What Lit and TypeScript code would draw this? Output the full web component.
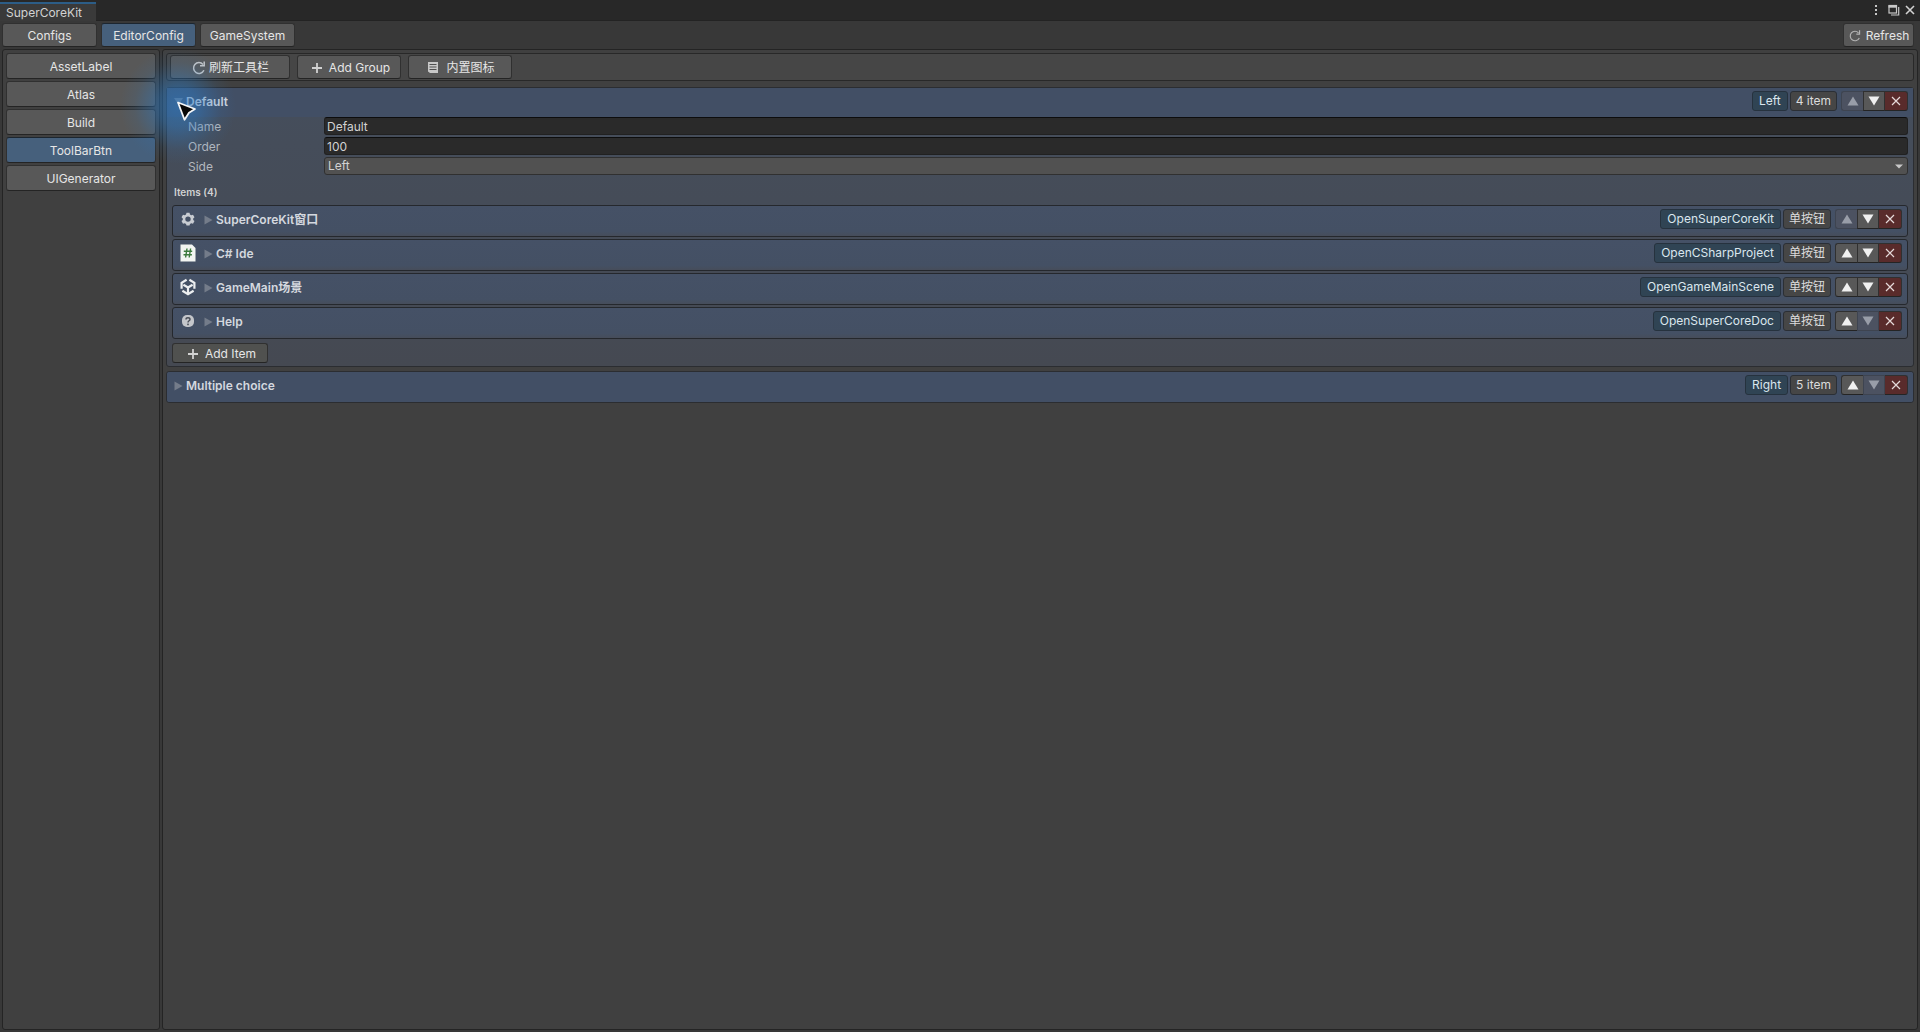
import { LitElement, html, css, svg } from "lit";
import { customElement, property, state } from "lit/decorators.js";
import { classMap } from "lit/directives/class-map.js";

const refreshIcon = svg`<svg width="16" height="16" viewBox="0 0 16 16" fill="none" stroke="#c8c8c8" aria-hidden="true">
  <path d="M12.900 10.200A5.400 5.400 0 1 1 12 4.400" stroke-width="1.500"/><path d="M13.200 1.500V5.800H9" stroke-width="1.500"/></svg>`;
const smallRefreshIcon = svg`<svg width="14" height="14" viewBox="0 0 16 16" fill="none" stroke="#b4b4b4" aria-hidden="true">
  <path d="M12.900 10.200A5.400 5.400 0 1 1 12 4.400" stroke-width="1.300"/><path d="M13.200 1.500V5.800H9.500" stroke-width="1.400"/></svg>`;
const plusIcon = svg`<svg width="16" height="16" viewBox="0 0 16 16" fill="none" stroke="#d2d2d2" stroke-width="1.800" aria-hidden="true">
  <path d="M9 3v10M4 8h10"/></svg>`;
const listIcon = svg`<svg width="16" height="16" viewBox="0 0 16 16" aria-hidden="true">
  <path d="M3 2h10v11H5l-2-1.500z" fill="#c8c8c8"/><path d="M4.500 4.500h7M4.500 7h7M4.500 9.500h7" stroke="#505050"/></svg>`;
const gearIcon = svg`<svg width="16" height="16" viewBox="0 0 16 16" aria-hidden="true">
  <path fill="#c8ccd2" fill-rule="evenodd" d="M6.500 1.800h3l.5 1.700 1.200.7 1.800-.5 1.500 2.600-1.300 1.200v1.400l1.300 1.200-1.500 2.600-1.800-.5-1.200.7-.5 1.700h-3L6 12.900l-1.200-.7-1.800.5-1.500-2.600 1.300-1.200V7.500L1.500 6.300 3 3.700l1.800.5L6 3.500zM8 5.400a2.700 2.700 0 1 0 0 5.400 2.700 2.700 0 0 0 0-5.400z"/></svg>`;
const scriptIcon = svg`<svg width="16" height="18" viewBox="0 0 16 18" aria-hidden="true">
  <path d="M.5.5h11.500L15.500 4v13.500H.5z" fill="#f2f5f2"/>
  <path d="M7 4.500 5.600 13.500M10.600 4.500 9.200 13.500M3.800 7.200h8.400M3.500 10.800h8.400" stroke="#3c7a3e" stroke-width="1.400" fill="none"/></svg>`;
const sceneIcon = svg`<svg width="16" height="18" viewBox="0 0 16 18" fill="none" stroke="#eceef0" stroke-width="2.200" aria-hidden="true">
  <path d="M8 9.500V16M8 9.500 3.400 6.800M8 9.500l4.600-2.700"/>
  <path d="M6.600 1.700 1.600 4.800V10.800M9.400 1.700 14.400 4.800V10.800M2.400 12.800 8 16.200l5.600-3.400"/></svg>`;
const helpIcon = svg`<svg width="16" height="16" viewBox="0 0 16 16" aria-hidden="true">
  <rect x="2" y="2" width="12" height="12" rx="5" fill="#c4c6ca"/>
  <path d="M6 6.500C6 4.200 10 4.200 10 6.500 10 7.800 8 7.800 8 9.400" stroke="#484c55" stroke-width="1.400" fill="none"/><rect x="7.200" y="10.600" width="1.600" height="1.600" fill="#484c55"/></svg>`;
const upIcon = svg`<svg width="12" height="10" viewBox="0 0 12 10" aria-hidden="true"><path d="M6 0.500 11.500 9.500H.5z" fill="currentColor"/></svg>`;
const downIcon = svg`<svg width="12" height="10" viewBox="0 0 12 10" aria-hidden="true"><path d="M6 9.500.5.5h11z" fill="currentColor"/></svg>`;
const crossIcon = svg`<svg width="10" height="10" viewBox="0 0 10 10" aria-hidden="true"><path d="M1 1l8 8M9 1 1 9" stroke="currentColor" stroke-width="1.200"/></svg>`;

const itemIcons = { gear: gearIcon, script: scriptIcon, scene: sceneIcon, help: helpIcon };

interface ToolItem {
  icon: keyof typeof itemIcons;
  name: string;
  method: string;
}

const items: ToolItem[] = [
  { icon: "gear", name: "SuperCoreKit窗口", method: "OpenSuperCoreKit" },
  { icon: "script", name: "C# Ide", method: "OpenCSharpProject" },
  { icon: "scene", name: "GameMain场景", method: "OpenGameMainScene" },
  { icon: "help", name: "Help", method: "OpenSuperCoreDoc" },
];

const base = css`
  * { box-sizing: border-box; }
  svg { display: block; flex: none; }
  button {
    font: inherit;
    color: #e6e6e6;
    margin: 0;
    padding: 0;
    display: flex;
    align-items: center;
    justify-content: center;
    background: #585858;
    border: 1px solid #303030;
    border-bottom-color: #242424;
    border-radius: 3px;
    white-space: nowrap;
  }
`;

@customElement("row-controls")
export class RowControls extends LitElement {
  @property() tag = "";
  @property() kind = "";
  @property({ type: Boolean }) first = false;
  @property({ type: Boolean }) last = false;

  static styles = [base, css`
    :host { display: flex; align-items: center; flex: none; }
    .pill {
      height: 20px;
      padding: 0 5px;
      margin-right: 2px;
      line-height: 18px;
      border: 1px solid #2b2f35;
      border-radius: 3px;
      background: #464646;
      color: #dcdcdc;
      white-space: nowrap;
    }
    .tag { padding: 0 6px; background: #304454; border-color: #26323e; color: #dbe7ee; }
    .moves { display: flex; margin-left: 2px; }
    .moves button { width: 22px; height: 20px; border-radius: 0; color: #f0f0f0; }
    .moves button:first-child { border-radius: 3px 0 0 3px; border-right: 0; }
    .moves .remove { width: 23px; background: #592b2b; border-radius: 0 3px 3px 0; border-left: 0; color: #e6dada; }
    .moves button:disabled { background: #4c5261; border-color: #3e4450; color: #989da8; }
  `];

  render() {
    return html`
      <span class="pill tag">${this.tag}</span>
      <span class="pill">${this.kind}</span>
      <div class="moves">
        <button aria-label="Move up" ?disabled=${this.first}>${upIcon}</button>
        <button aria-label="Move down" ?disabled=${this.last}>${downIcon}</button>
        <button class="remove" aria-label="Remove">${crossIcon}</button>
      </div>`;
  }
}

@customElement("app-root")
export class AppRoot extends LitElement {
  @state() private tab = "EditorConfig";
  @state() private section = "ToolBarBtn";

  static styles = [base, css`
    :host {
      display: flex;
      flex-direction: column;
      position: relative;
      min-height: 100vh;
      background: #383838;
      color: #d2d2d2;
      font: 12px/16px Inter, "Noto Sans CJK SC", sans-serif;
      overflow: hidden;
    }
    .titlebar {
      display: flex;
      justify-content: space-between;
      height: 21px;
      background: #282828;
      border-bottom: 1px solid #232323;
    }
    .window-tab {
      margin-top: 2px;
      height: 19px;
      padding: 0 14px 0 6px;
      border-top: 2px solid #2c5d87;
      background: #3a3a3a;
      line-height: 18px;
    }
    .window-tools { display: flex; padding: 2px 5px 0 0; gap: 4px; }
    .window-tools button { background: none; border: 0; height: 16px; }
    .tabs { display: flex; gap: 4px; padding: 2px 6px 2px 2px; height: 28px; }
    .tabs button { width: 95px; height: 24px; padding-top: 2px; }
    .tabs .refresh { width: 71px; margin-left: auto; gap: 4px; }
    button.on { background: #46607c; border-top-color: #1c2630; }
    .body { display: flex; flex: 1; gap: 2px; padding: 0 2px 2px; }
    .side, .main {
      border: 1px solid #242424;
      border-radius: 3px;
      background: #404040;
      padding: 3px;
    }
    .side { display: flex; flex-direction: column; gap: 2px; width: 158px; flex: none; }
    .side button { height: 26px; padding-top: 2px; }
    .main { flex: 1; min-width: 0; }
    .toolbar {
      display: flex;
      gap: 7px;
      height: 28px;
      padding: 1px 3px;
      border: 1px solid #282828;
      border-radius: 3px;
      background: #464646;
      margin-bottom: 6px;
    }
    .toolbar button { height: 24px; width: 104px; padding-top: 2px; gap: 5px; }
    .toolbar .wide { width: 120px; gap: 2px; }
    .group {
      border: 1px solid #2b2d31;
      border-radius: 3px;
      background: linear-gradient(#454e5c, #454b56 60%, #454952);
      padding-bottom: 3px;
      margin-bottom: 4px;
    }
    .closed { background: #425064; padding: 0; }
    .head {
      display: flex;
      justify-content: space-between;
      align-items: flex-start;
      height: 29px;
      padding: 3px 5px 0 6px;
      background: #424f65;
    }
    .closed .head { height: 30px; border-radius: 3px; }
    .fold { color: #d4d8df; background: none; border: 0; font-weight: 600; gap: 3px; height: 20px; padding-top: 2px; }
    .fold svg { color: #747c8a; }
    .field { display: flex; align-items: center; margin: 0 5px 2px 21px; height: 18px; }
    .field label { width: 136px; flex: none; padding-top: 2px; color: #b4b8be; }
    input, select {
      flex: 1;
      min-width: 0;
      height: 18px;
      margin: 0;
      padding: 0 2px;
      font: inherit;
      color: #d2d2d2;
      background: #2a2a2a;
      border: 1px solid #212121;
      border-top-color: #0d0d0d;
      border-radius: 3px;
      appearance: none;
    }
    .picker { flex: 1; display: grid; align-items: center; }
    .picker > * { grid-area: 1 / 1; }
    .picker svg { justify-self: end; margin-right: 5px; pointer-events: none; }
    select { background: #515151; border-color: #303030; line-height: 16px; padding: 0 3px; }
    .count { font-size: 10px; font-weight: 600; line-height: 16px; margin: 9px 0 5px 7px; }
    .item {
      display: flex;
      align-items: flex-start;
      height: 32px;
      padding: 3px 5px 0 7px;
      margin: 0 5px 2px;
      border: 1px solid #25282d;
      border-radius: 3px;
      background: linear-gradient(#455166, #445064 85%, #464d5a);
    }
    .pic { display: grid; place-items: center; width: 16px; height: 20px; margin-right: 7px; }
    .item row-controls { margin-left: auto; }
    .add { width: 96px; height: 20px; margin: 4px 0 0 5px; padding: 1px 0 0; gap: 5px; background: #50514f; }
    .glow {
      position: absolute;
      left: 120px;
      top: 48px;
      width: 116px;
      height: 116px;
      pointer-events: none;
      background: radial-gradient(closest-side, rgba(44, 124, 200, 0.6), rgba(44, 124, 200, 0.45) 35%, rgba(44, 124, 200, 0.1) 75%, rgba(44, 124, 200, 0));
    }
    .pointer { position: absolute; left: 176px; top: 100px; pointer-events: none; }
  `];

  private fold(name: string, open = false) {
    return html`<button class="fold" aria-expanded=${open}>
      ${open
        ? html`<svg width="10" height="10" viewBox="0 0 10 10" aria-hidden="true"><path d="M1 1h9L5.500 8z" fill="currentColor"/></svg>`
        : html`<svg width="10" height="10" viewBox="0 0 10 10" aria-hidden="true"><path d="M1.500 .5 9.500 5l-8 4.500z" fill="currentColor"/></svg>`}
      ${name}</button>`;
  }

  private choice(name: string, current: string, pick: () => void) {
    return html`<button class=${classMap({ on: name === current })} @click=${pick}>${name}</button>`;
  }

  render() {
    return html`
      <header class="titlebar">
        <span class="window-tab">SuperCoreKit</span>
        <div class="window-tools">
          <button aria-label="Menu"><svg width="14" height="16" viewBox="0 0 14 16" fill="#c8c8c8"><path d="M5 3h2v2H5zM5 7h2v2H5zM5 11h2v2H5z"/></svg></button>
          <button aria-label="Maximize"><svg width="13" height="16" viewBox="0 0 13 16" fill="none" stroke="#c8c8c8"><rect x="1" y="3.500" width="7.500" height="7.500" stroke-width="1.200"/><path d="M.5 4.500H9" stroke-width="2.400"/><path d="M10.700 5v8H3" stroke-width="1.200"/></svg></button>
          <button aria-label="Close"><svg width="10" height="16" viewBox="0 0 10 16" stroke="#d2d2d2" stroke-width="1.600"><path d="M1 4l8 8M9 4l-8 8"/></svg></button>
        </div>
      </header>
      <nav class="tabs">
        ${["Configs", "EditorConfig", "GameSystem"].map((t) => this.choice(t, this.tab, () => (this.tab = t)))}
        <button class="refresh">${smallRefreshIcon}Refresh</button>
      </nav>
      <div class="body">
        <nav class="side">
          ${["AssetLabel", "Atlas", "Build", "ToolBarBtn", "UIGenerator"].map((s) =>
            this.choice(s, this.section, () => (this.section = s)))}
        </nav>
        <main class="main">
          <div class="toolbar">
            <button class="wide">${refreshIcon}刷新工具栏</button>
            <button>${plusIcon}Add Group</button>
            <button>${listIcon}内置图标</button>
          </div>
          <section class="group">
            <div class="head">${this.fold("Default", true)}
              <row-controls tag="Left" kind="4 item" first></row-controls></div>
            <div class="field"><label for="name">Name</label><input id="name" .value=${"Default"}></div>
            <div class="field"><label for="order">Order</label><input id="order" .value=${"100"}></div>
            <div class="field"><label for="side">Side</label>
              <div class="picker">
                <select id="side"><option>Left</option><option>Right</option></select>
                <svg width="8" height="5" viewBox="0 0 8 5" aria-hidden="true"><path d="M0 .5h8L4 4.500z" fill="#c8c8c8"/></svg>
              </div></div>
            <div class="count">Items (${items.length})</div>
            ${items.map((item, i) => html`
              <div class="item">
                <span class="pic">${itemIcons[item.icon]}</span>
                ${this.fold(item.name)}
                <row-controls tag=${item.method} kind="单按钮" ?first=${i === 0} ?last=${i === items.length - 1}></row-controls>
              </div>`)}
            <button class="add">${plusIcon}Add Item</button>
          </section>
          <section class="group closed">
            <div class="head">${this.fold("Multiple choice")}
              <row-controls tag="Right" kind="5 item" last></row-controls></div>
          </section>
        </main>
      </div>
      <div class="glow"></div>
      <svg class="pointer" width="22" height="24" viewBox="0 0 22 24" aria-hidden="true">
        <path d="M2 2.500 19 9 13 12.800 8.500 19.800z" fill="#080808" stroke="#f4f6f8" stroke-width="1.800" stroke-linejoin="round"/></svg>`;
  }
}
